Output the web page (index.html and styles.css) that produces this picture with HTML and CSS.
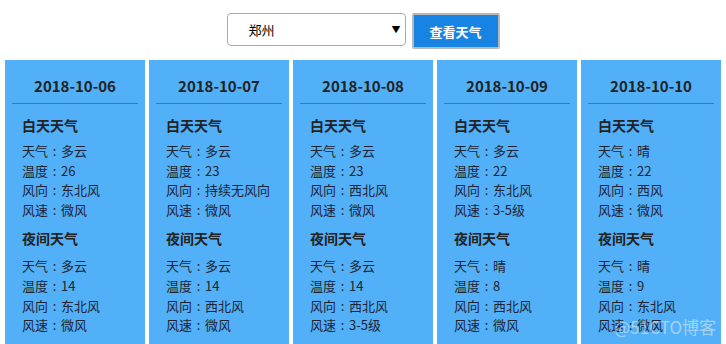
FILE: index.html
```html
<!DOCTYPE html>
<html lang="zh">
<head>
<meta charset="utf-8">
<link rel="stylesheet" href="styles.css">
</head>
<body>
<div class="toolbar">
  <div class="select"><span class="select-text">郑州</span><span class="arrow">▼</span></div>
  <button class="btn">查看天气</button>
</div>
<div class="cards">
  <div class="card">
    <div class="date">2018-10-06</div>
    <div class="section">
      <div class="title">白天天气</div>
      <div class="row">天气<span class="c">:</span>多云</div><div class="row">温度<span class="c">:</span>26</div><div class="row">风向<span class="c">:</span>东北风</div><div class="row">风速<span class="c">:</span>微风</div>
    </div>
    <div class="section">
      <div class="title">夜间天气</div>
      <div class="row">天气<span class="c">:</span>多云</div><div class="row">温度<span class="c">:</span>14</div><div class="row">风向<span class="c">:</span>东北风</div><div class="row">风速<span class="c">:</span>微风</div>
    </div>
  </div>
  <div class="card">
    <div class="date">2018-10-07</div>
    <div class="section">
      <div class="title">白天天气</div>
      <div class="row">天气<span class="c">:</span>多云</div><div class="row">温度<span class="c">:</span>23</div><div class="row">风向<span class="c">:</span>持续无风向</div><div class="row">风速<span class="c">:</span>微风</div>
    </div>
    <div class="section">
      <div class="title">夜间天气</div>
      <div class="row">天气<span class="c">:</span>多云</div><div class="row">温度<span class="c">:</span>14</div><div class="row">风向<span class="c">:</span>西北风</div><div class="row">风速<span class="c">:</span>微风</div>
    </div>
  </div>
  <div class="card">
    <div class="date">2018-10-08</div>
    <div class="section">
      <div class="title">白天天气</div>
      <div class="row">天气<span class="c">:</span>多云</div><div class="row">温度<span class="c">:</span>23</div><div class="row">风向<span class="c">:</span>西北风</div><div class="row">风速<span class="c">:</span>微风</div>
    </div>
    <div class="section">
      <div class="title">夜间天气</div>
      <div class="row">天气<span class="c">:</span>多云</div><div class="row">温度<span class="c">:</span>14</div><div class="row">风向<span class="c">:</span>西北风</div><div class="row">风速<span class="c">:</span>3-5级</div>
    </div>
  </div>
  <div class="card">
    <div class="date">2018-10-09</div>
    <div class="section">
      <div class="title">白天天气</div>
      <div class="row">天气<span class="c">:</span>多云</div><div class="row">温度<span class="c">:</span>22</div><div class="row">风向<span class="c">:</span>东北风</div><div class="row">风速<span class="c">:</span>3-5级</div>
    </div>
    <div class="section">
      <div class="title">夜间天气</div>
      <div class="row">天气<span class="c">:</span>晴</div><div class="row">温度<span class="c">:</span>8</div><div class="row">风向<span class="c">:</span>西北风</div><div class="row">风速<span class="c">:</span>微风</div>
    </div>
  </div>
  <div class="card">
    <div class="date">2018-10-10</div>
    <div class="section">
      <div class="title">白天天气</div>
      <div class="row">天气<span class="c">:</span>晴</div><div class="row">温度<span class="c">:</span>22</div><div class="row">风向<span class="c">:</span>西风</div><div class="row">风速<span class="c">:</span>微风</div>
    </div>
    <div class="section">
      <div class="title">夜间天气</div>
      <div class="row">天气<span class="c">:</span>晴</div><div class="row">温度<span class="c">:</span>9</div><div class="row">风向<span class="c">:</span>东北风</div><div class="row">风速<span class="c">:</span>微风</div>
    </div>
  </div>
</div>
<div class="watermark">@51CTO博客</div>
</body>
</html>
```
FILE: styles.css
```css
html, body {
  margin: 0;
  padding: 0;
  background: #fff;
  overflow: hidden;
}
body {
  font-family: "Noto Sans CJK SC", "Noto Sans", sans-serif;
  color: #222;
  position: relative;
  height: 344px;
}
.toolbar {
  display: flex;
  justify-content: center;
  align-items: flex-start;
  gap: 6px;
  padding-top: 13px;
  height: 47px;
  box-sizing: border-box;
}
.select {
  width: 179px;
  height: 33px;
  box-sizing: border-box;
  border: 1px solid #a9a9a9;
  border-radius: 4px;
  display: flex;
  align-items: center;
  justify-content: space-between;
  padding: 0 4px 0 21px;
  font-size: 13px;
  color: #000;
}
.select-text { line-height: 1; }
.arrow { font-size: 9px; color: #000; }
.btn {
  width: 88px;
  height: 36px;
  box-sizing: border-box;
  border: 2px solid #b8b8b8;
  border-radius: 2px;
  background: #1783e2;
  color: #fff;
  font-family: "Noto Sans CJK SC", sans-serif;
  font-weight: bold;
  font-size: 13px;
  padding: 0;
  margin: 0;
}
.cards {
  display: flex;
  justify-content: center;
  gap: 4px;
  margin-top: 13px;
}
.card {
  width: 140px;
  height: 290px;
  background: #52b0f8;
  box-sizing: border-box;
  padding: 0 7px;
}
.date {
  font-weight: bold;
  font-size: 15px;
  text-align: center;
  height: 44px;
  line-height: 20px;
  padding-top: 16px;
  box-sizing: border-box;
  border-bottom: 1px solid #5f6f80;
  color: #222;
}
.section {
  padding-left: 10px;
}
.title {
  font-weight: bold;
  font-size: 14px;
  line-height: 20px;
  margin-top: 11px;
  margin-bottom: 6px;
}
.section + .section .title {
  margin-top: 9px;
  margin-bottom: 8px;
}
.row {
  font-size: 13px;
  line-height: 19.6px;
  white-space: nowrap;
  color: #1e2433;
}
.c {
  display: inline-block;
  width: 1em;
  text-align: center;
}
.watermark {
  position: absolute;
  right: 10px;
  top: 314px;
  font-size: 17px;
  color: rgba(235, 240, 245, 0.55);
  font-family: "Noto Sans CJK SC", sans-serif;
}
```
